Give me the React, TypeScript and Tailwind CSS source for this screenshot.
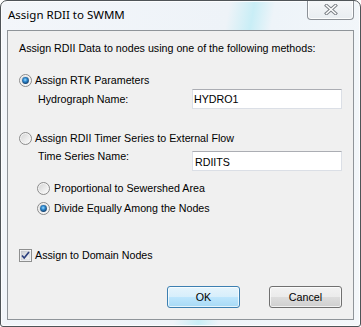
import React from "react";

function Radio({ checked }: { checked?: boolean }) {
  const id = checked ? "rc" : "ru";
  return (
    <svg width="13" height="13" viewBox="0 0 13 13" className="shrink-0">
      <defs>
        <linearGradient id={id + "bg"} x1="0" y1="0" x2="1" y2="1">
          <stop offset="0" stopColor="#d6d6d6" />
          <stop offset="1" stopColor="#fbfbfb" />
        </linearGradient>
        <radialGradient id={id + "dot"} cx="0.45" cy="0.4" r="0.6">
          <stop offset="0" stopColor="#9fdcff" />
          <stop offset="0.45" stopColor="#2f8ad0" />
          <stop offset="1" stopColor="#123d6a" />
        </radialGradient>
      </defs>
      <circle cx="6.5" cy="6.5" r="6" fill="#f4f4f4" stroke="#8a8a8a" strokeWidth="1" />
      <circle cx="6.5" cy="6.5" r="4.5" fill={`url(#${id}bg)`} />
      {checked && <circle cx="6.5" cy="6.5" r="3.4" fill={`url(#${id}dot)`} />}
    </svg>
  );
}

function Checkbox() {
  return (
    <svg width="13" height="13" viewBox="0 0 13 13" className="shrink-0">
      <defs>
        <linearGradient id="cbg" x1="0" y1="0" x2="1" y2="1">
          <stop offset="0" stopColor="#c8ccd2" />
          <stop offset="1" stopColor="#f7f7f7" />
        </linearGradient>
      </defs>
      <rect x="0.5" y="0.5" width="12" height="12" fill="#fff" stroke="#8e8f8f" />
      <rect x="2" y="2" width="9" height="9" fill="url(#cbg)" stroke="#b8bcc4" strokeWidth="0.5" />
      <path d="M3 6.5 L5.2 9 L10 3" fill="none" stroke="#2b3f7e" strokeWidth="1.7" />
    </svg>
  );
}

function Button({ label, primary }: { label: string; primary?: boolean }) {
  return (
    <div
      className={
        "w-[73px] h-[22px] rounded-[3px] border flex items-center justify-center shadow-[inset_0_0_0_1px_rgba(255,255,255,0.7)] " +
        (primary
          ? "border-[#3c7fb1] bg-[linear-gradient(#e5f4fc_0%,#d7eefb_50%,#bee6fd_50%,#a7d9f5_100%)]"
          : "border-[#707070] bg-[linear-gradient(#f2f2f2_0%,#ebebeb_50%,#dddddd_50%,#cfcfcf_100%)]")
      }
    >
      <span className="leading-[13px]">{label}</span>
    </div>
  );
}

export default function App() {
  return (
    <div
      className="w-[361px] h-[327px] border border-[#4f5458] rounded-t-[7px] rounded-b-[3px] flex flex-col overflow-hidden bg-[linear-gradient(100deg,#f3f6fa_0%,#eef3f8_55%,#c9eef6_61%,#eef4f9_66%,#f4f7fa_100%)] shadow-[inset_0_0_0_1px_rgba(255,255,255,0.8)]"
      style={{ fontFamily: '"Liberation Sans", Arial, sans-serif' }}
    >
      <div className="h-[29px] flex items-start">
        <div
          className="pl-[7px] pt-[6px] text-[11.5px] leading-[16px] text-black"
          style={{ fontFamily: '"Noto Sans", "Open Sans", sans-serif' }}
        >
          Assign RDII to SWMM
        </div>
        <div className="ml-auto mr-[6px] -mt-px w-[47px] h-[20px] rounded-b-[4px] border border-[#8c9197] border-t-0 bg-[linear-gradient(#f5f7f9,#e9edf1)] flex items-center justify-center shadow-[inset_0_0_0_1px_rgba(255,255,255,0.85)]">
          <svg width="14" height="11" viewBox="0 0 14 11">
            <path d="M2.5 1.5 L11.5 9.5 M11.5 1.5 L2.5 9.5" stroke="#7d8288" strokeWidth="3.4" strokeLinecap="square" />
            <path d="M2.5 1.5 L11.5 9.5 M11.5 1.5 L2.5 9.5" stroke="#ffffff" strokeWidth="1.5" strokeLinecap="square" />
          </svg>
        </div>
      </div>
      <div
        className="mx-[6px] h-[290px] border border-[#8f9499] bg-[#f0f0f0] pl-[11px] pr-[11px] pt-[11px] flex flex-col text-[10.7px] text-black"
      >
        <div className="leading-[13px]">Assign RDII Data to nodes using one of the following methods:</div>

        <div className="mt-[19px] flex items-center gap-[3px] h-[13px] leading-[13px]">
          <Radio checked />
          <span>Assign RTK Parameters</span>
        </div>

        <div className="mt-[2px] flex items-start h-[20px]">
          <div className="ml-[19px] w-[155px] mt-[4px] leading-[13px]">Hydrograph Name:</div>
          <div className="w-[151px] h-[20px] bg-white border border-[#dbdfe6] border-t-[#abadb3] pl-[1px] flex items-center leading-[13px]">
            HYDRO1
          </div>
        </div>

        <div className="mt-[23px] flex items-center gap-[3px] h-[13px] leading-[13px]">
          <Radio />
          <span>Assign RDII Timer Series to External Flow</span>
        </div>

        <div className="mt-[5px] flex items-start h-[21px]">
          <div className="ml-[19px] w-[155px] leading-[13px]">Time Series Name:</div>
          <div className="mt-[1px] w-[151px] h-[20px] bg-white border border-[#dbdfe6] border-t-[#abadb3] pl-[2px] pt-[2px] flex items-center leading-[13px]">
            RDIITS
          </div>
        </div>

        <div className="mt-[11px] ml-[18px] flex items-center gap-[4px] h-[13px] leading-[13px]">
          <Radio />
          <span>Proportional to Sewershed Area</span>
        </div>

        <div className="mt-[7px] ml-[18px] flex items-center gap-[4px] h-[13px] leading-[13px]">
          <Radio checked />
          <span>Divide Equally Among the Nodes</span>
        </div>

        <div className="mt-[34px] flex items-center gap-[3px] h-[13px] leading-[13px]">
          <Checkbox />
          <span>Assign to Domain Nodes</span>
        </div>

        <div className="mt-[24px] flex justify-end gap-[29px]">
          <Button label="OK" primary />
          <Button label="Cancel" />
        </div>
      </div>
    </div>
  );
}
